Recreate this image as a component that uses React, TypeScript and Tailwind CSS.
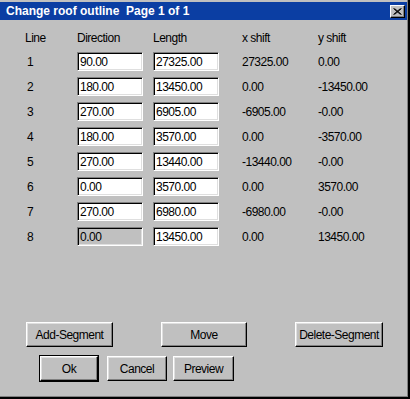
import React from "react";

const rows = [
  { dir: "90.00", len: "27325.00", x: "27325.00", y: "0.00" },
  { dir: "180.00", len: "13450.00", x: "0.00", y: "-13450.00" },
  { dir: "270.00", len: "6905.00", x: "-6905.00", y: "-0.00" },
  { dir: "180.00", len: "3570.00", x: "0.00", y: "-3570.00" },
  { dir: "270.00", len: "13440.00", x: "-13440.00", y: "-0.00" },
  { dir: "0.00", len: "3570.00", x: "0.00", y: "3570.00" },
  { dir: "270.00", len: "6980.00", x: "-6980.00", y: "-0.00" },
  { dir: "0.00", len: "13450.00", x: "0.00", y: "13450.00", locked: true },
];

const Field = ({ value, disabled = false }: { value: string; disabled?: boolean }) => (
  <div
    className={`w-[66px] h-[19px] flex items-center pl-[2px] border border-t-[#808080] border-l-[#808080] border-b-white border-r-white shadow-[inset_1px_1px_0_#000,inset_-1px_-1px_0_#dfdfdf] ${disabled ? "bg-[#c0c0c0]" : "bg-white"}`}>
    {value}
  </div>
);

const Button = ({ label, width, isDefault = false }: { label: string; width: string; isDefault?: boolean }) => (
  <div className={isDefault ? "border border-black" : ""}>
    <button
      type="button"
      className={`${width} h-[25px] flex items-center justify-center bg-[#c0c0c0] border border-t-white border-l-white border-b-black border-r-black shadow-[inset_-1px_-1px_0_#808080,inset_1px_1px_0_#dfdfdf]`}>
      {label}
    </button>
  </div>
);

export default function App() {
  return (
    <div className="w-[410px] h-[399px] bg-[#c0c0c0] border-r-2 border-b-2 border-black text-[12px] tracking-[-0.5px] text-black leading-none" style={{ fontFamily: '"Liberation Sans", Arial, sans-serif' }}>
      <div className="h-full border-r border-b border-[#808080] pt-[2px] flex flex-col">
        {/* Title bar */}
        <div className="h-[18px] bg-[#0b3ea3] flex items-center pl-[6px] pr-[2px]">
          <span className="text-white font-bold text-[12px] tracking-[0px] whitespace-pre mr-auto">Change roof outline  Page 1 of 1</span>
          <div className="w-[15px] h-[13px] bg-[#c0c0c0] flex items-center justify-center border border-t-white border-l-white border-b-black border-r-black shadow-[inset_-1px_-1px_0_#808080]">
            <svg width="9" height="7" viewBox="0 0 9 7">
              <path d="M0.5 0.5 L7.5 6.5 M1.5 0.5 L8.5 6.5 M7.5 0.5 L0.5 6.5 M8.5 0.5 L1.5 6.5" stroke="#000" strokeWidth="1" />
            </svg>
          </div>
        </div>

        {/* Table */}
        <div className="mt-[7px] pl-[25px] grid grid-cols-[52px_76px_89px_76px_1fr]">
          <div className="h-[22px] flex items-center">Line</div>
          <div className="h-[22px] flex items-center">Direction</div>
          <div className="h-[22px] flex items-center">Length</div>
          <div className="h-[22px] flex items-center">x shift</div>
          <div className="h-[22px] flex items-center">y shift</div>
          {rows.map((r, i) => (
            <React.Fragment key={i}>
              <div className="h-[25px] flex items-center pl-[2px]">{i + 1}</div>
              <div className="h-[25px] flex items-center"><Field value={r.dir} disabled={r.locked} /></div>
              <div className="h-[25px] flex items-center"><Field value={r.len} /></div>
              <div className="h-[25px] flex items-center">{r.x}</div>
              <div className="h-[25px] flex items-center">{r.y}</div>
            </React.Fragment>
          ))}
        </div>

        {/* Actions */}
        <div className="mt-[73px] flex pl-[26px]">
          <Button label="Add-Segment" width="w-[87px]" />
          <div className="ml-[48px]"><Button label="Move" width="w-[86px]" /></div>
          <div className="ml-[48px]"><Button label="Delete-Segment" width="w-[88px]" /></div>
        </div>
        <div className="mt-[8px] flex pl-[39px] items-center">
          <Button label="Ok" width="w-[58px]" isDefault />
          <div className="ml-[8px]"><Button label="Cancel" width="w-[60px]" /></div>
          <div className="ml-[6px]"><Button label="Preview" width="w-[61px]" /></div>
        </div>
      </div>
    </div>
  );
}
